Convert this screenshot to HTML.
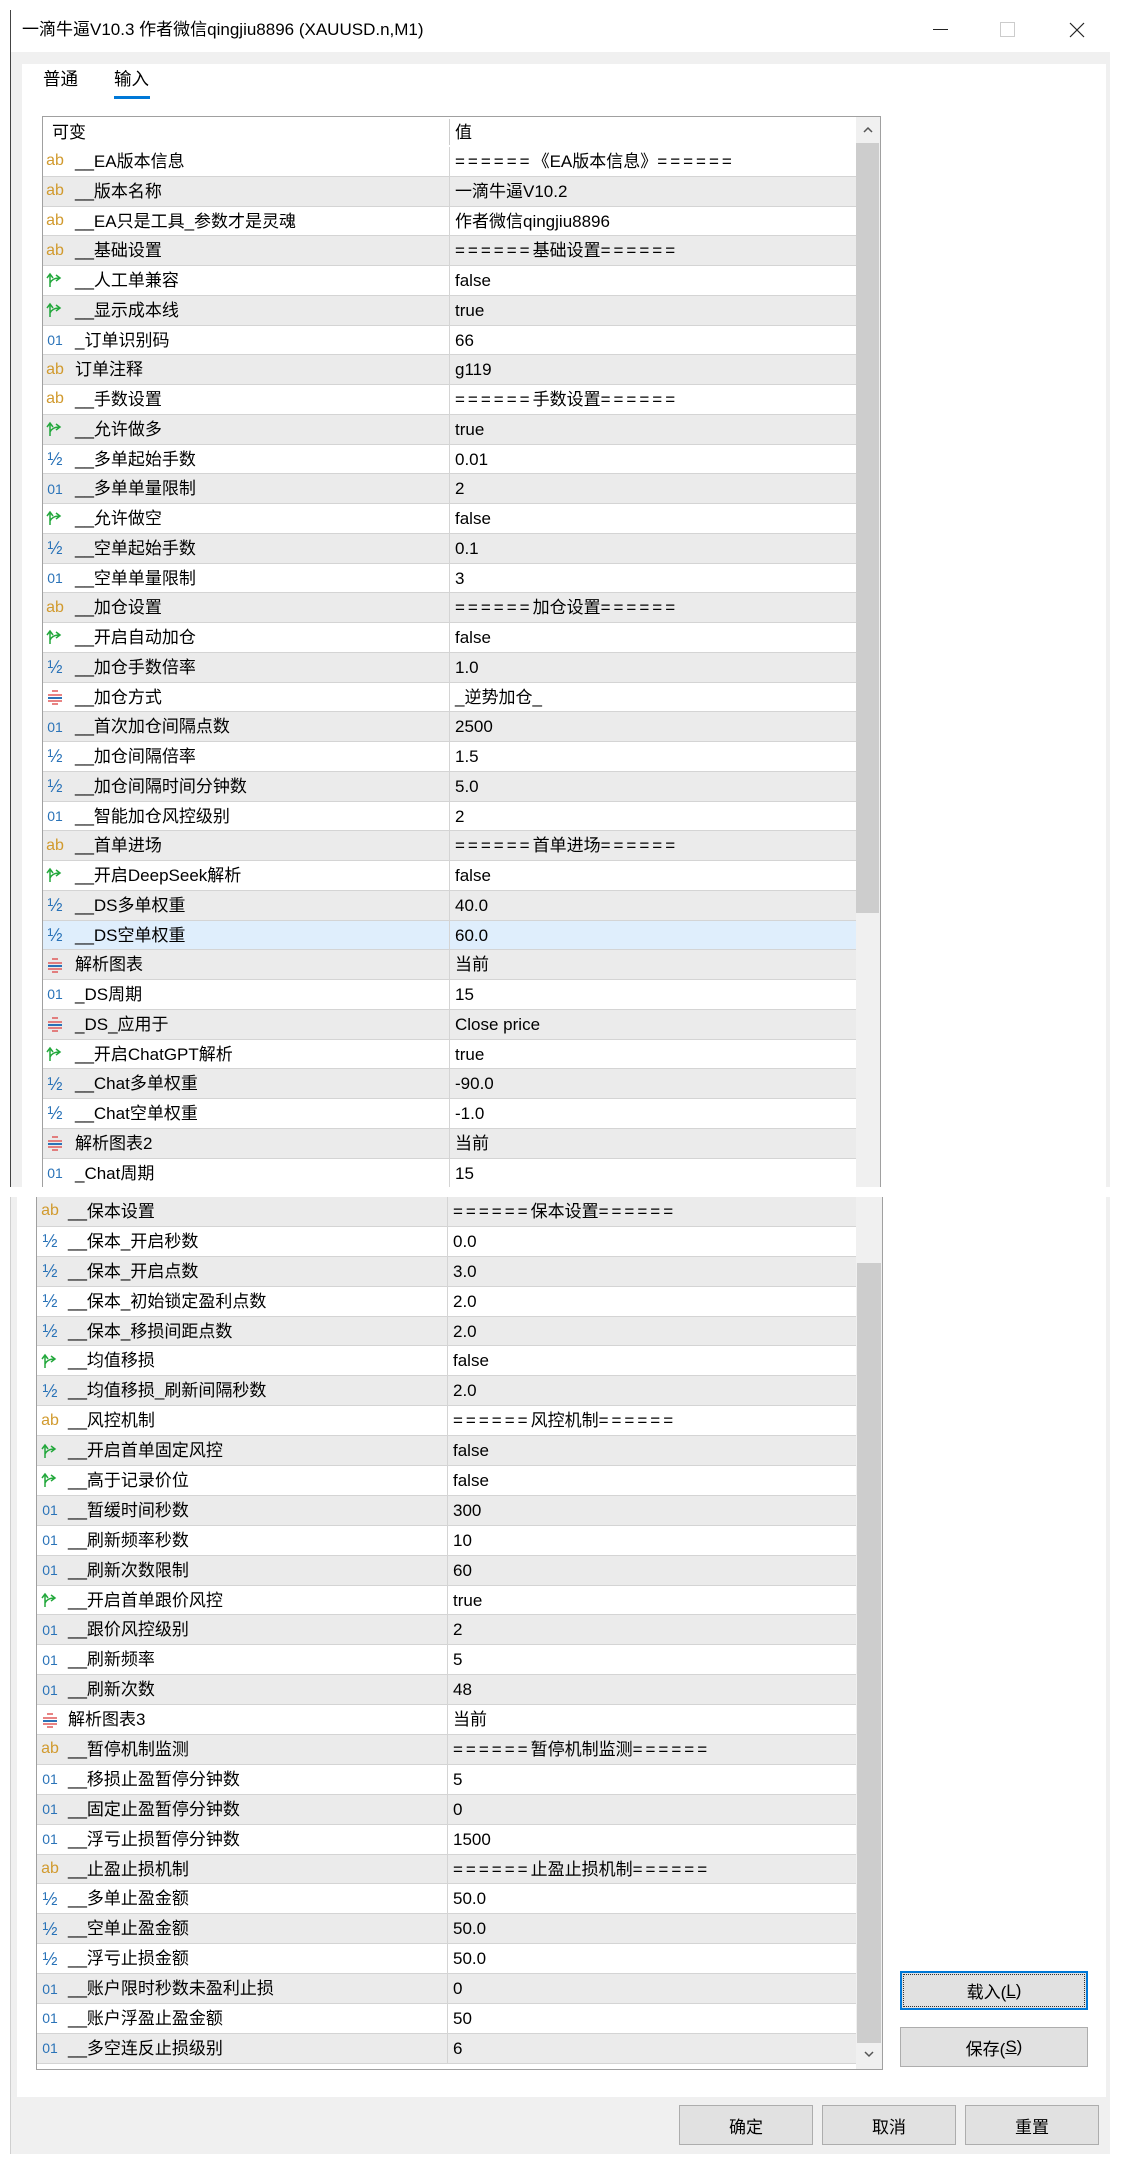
<!DOCTYPE html>
<html><head><meta charset="utf-8">
<style>
*{margin:0;padding:0;box-sizing:border-box}
body{width:1127px;height:2164px;position:relative;background:#fff;font-family:"Liberation Sans","Noto Sans CJK SC",sans-serif;color:#000;overflow:hidden}
.abs{position:absolute}
.row{position:relative;border-bottom:1px solid #d4d4d4;font-size:17px;white-space:nowrap}
.g{background:#ebebeb}
.w{background:#fff}
.h{background:#dfeefc}
.ic{position:absolute;width:22px;text-align:center;font-size:16px;line-height:20px}
.nm,.vl{position:absolute;top:1px}
.eq{letter-spacing:3px}
.ab{color:#d19a2e}
.n01{color:#2a73b8;font-size:14px}
.hf{color:#2a73b8;font-size:18px}
.btn{position:absolute;background:#e1e1e1;border:1px solid #adadad;font-size:17px;display:flex;align-items:center;justify-content:center}
</style></head><body>

<div class="abs" style="left:22px;top:17px;font-size:17px;line-height:26px">一滴牛逼V10.3 作者微信qingjiu8896 (XAUUSD.n,M1)</div>
<div class="abs" style="left:933px;top:29px;width:15px;height:1px;background:#222"></div>
<div class="abs" style="left:1000px;top:22px;width:15px;height:15px;border:1px solid #ccc"></div>
<svg class="abs" style="left:1069px;top:22px" width="16" height="16"><path d="M1 1L15 15M15 1L1 15" stroke="#222" stroke-width="1.2"/></svg>

<div class="abs" style="left:10px;top:10px;width:1px;height:1177px;background:#444"></div>
<div class="abs" style="left:11px;top:52px;width:1099px;height:12px;background:#f0f0f0"></div>
<div class="abs" style="left:11px;top:64px;width:11px;height:1123px;background:#f0f0f0"></div>
<div class="abs" style="left:1106px;top:64px;width:4px;height:1123px;background:#f0f0f0"></div>
<div class="abs" style="left:43px;top:67px;font-size:17.5px;line-height:24px">普通</div>
<div class="abs" style="left:114px;top:67px;font-size:17.5px;line-height:24px">输入</div>
<div class="abs" style="left:114px;top:96px;width:36px;height:3px;background:#0078d7"></div>

<div class="abs" style="left:42px;top:116px;width:839px;height:1071px;border:1px solid #a0a0a0;border-bottom:none;overflow:hidden;background:#fff">
 <div style="position:absolute;left:0;top:0;width:813px">
  <div class="row w" style="height:30px;border-bottom:none"><span class="nm" style="left:9px;line-height:30px">可变</span><span class="vl" style="left:412px;line-height:30px">值</span><div style="position:absolute;left:406px;top:2px;width:1px;height:26px;background:#ccc"></div></div>
  <div id="t1"></div>
 </div>
 <div style="position:absolute;left:813px;top:0;width:24px;height:1071px;background:#f0f0f0"></div>
 <svg style="position:absolute;left:819px;top:8px" width="12" height="10"><path d="M2 7L6 3L10 7" stroke="#555" stroke-width="1.5" fill="none"/></svg>
 <div style="position:absolute;left:813px;top:26px;width:23px;height:770px;background:#cdcdcd"></div>
</div>

<div class="abs" style="left:10px;top:1197px;width:1px;height:957px;background:#d0d0d0"></div>
<div class="abs" style="left:11px;top:1197px;width:6px;height:957px;background:#f0f0f0"></div>
<div class="abs" style="left:17px;top:2097px;width:1093px;height:57px;background:#f0f0f0"></div>
<div class="abs" style="left:1106px;top:1197px;width:4px;height:900px;background:#f0f0f0"></div>

<div class="abs" style="left:36px;top:1197px;width:847px;height:873px;border:1px solid #a0a0a0;border-top:none;overflow:hidden;background:#fff">
 <div style="position:absolute;left:0;top:0;width:819px" id="t2"></div>
 <div style="position:absolute;left:819px;top:0;width:26px;height:873px;background:#f0f0f0"></div>
 <div style="position:absolute;left:820px;top:66px;width:24px;height:780px;background:#cdcdcd"></div>
 <svg style="position:absolute;left:826px;top:852px" width="12" height="10"><path d="M2 3L6 7L10 3" stroke="#555" stroke-width="1.5" fill="none"/></svg>
</div>

<div class="btn" style="left:900px;top:1971px;width:188px;height:39px;border:2px solid #0078d7"><div style="position:absolute;inset:1px;border:1px dotted #333"></div>载入(<u>L</u>)</div>
<div class="btn" style="left:900px;top:2027px;width:188px;height:40px">保存(<u>S</u>)</div>
<div class="btn" style="left:679px;top:2105px;width:134px;height:40px">确定</div>
<div class="btn" style="left:822px;top:2105px;width:134px;height:40px">取消</div>
<div class="btn" style="left:965px;top:2105px;width:134px;height:40px">重置</div>

<script>
const AB='<span class="ab">ab</span>',N='<span class="n01">01</span>',H='<span class="hf">½</span>';
const B='<svg width="20" height="20" viewBox="0 0 20 20"><path d="M5 17V5M2 8L5 4L8 8M5 13C7 9 10 8 14 8M11 5L15 8L11 11" stroke="#23a83c" stroke-width="1.5" fill="none"/></svg>';
const E='<svg width="20" height="20" viewBox="0 0 20 20"><path d="M7 4H13M3 8H17M3 14H17M7 17H13" stroke="#e05a5a" stroke-width="1.6"/><path d="M3 11H17" stroke="#2a73b8" stroke-width="2"/></svg>';
const r1=[[AB,'__EA版本信息','======《EA版本信息》======'],[AB,'__版本名称','一滴牛逼V10.2'],[AB,'__EA只是工具_参数才是灵魂','作者微信qingjiu8896'],[AB,'__基础设置','======基础设置======'],[B,'__人工单兼容','false'],[B,'__显示成本线','true'],[N,'_订单识别码','66'],[AB,'订单注释','g119'],[AB,'__手数设置','======手数设置======'],[B,'__允许做多','true'],[H,'__多单起始手数','0.01'],[N,'__多单单量限制','2'],[B,'__允许做空','false'],[H,'__空单起始手数','0.1'],[N,'__空单单量限制','3'],[AB,'__加仓设置','======加仓设置======'],[B,'__开启自动加仓','false'],[H,'__加仓手数倍率','1.0'],[E,'__加仓方式','_逆势加仓_'],[N,'__首次加仓间隔点数','2500'],[H,'__加仓间隔倍率','1.5'],[H,'__加仓间隔时间分钟数','5.0'],[N,'__智能加仓风控级别','2'],[AB,'__首单进场','======首单进场======'],[B,'__开启DeepSeek解析','false'],[H,'__DS多单权重','40.0'],[H,'__DS空单权重','60.0'],[E,'解析图表','当前'],[N,'_DS周期','15'],[E,'_DS_应用于','Close price'],[B,'__开启ChatGPT解析','true'],[H,'__Chat多单权重','-90.0'],[H,'__Chat空单权重','-1.0'],[E,'解析图表2','当前'],[N,'_Chat周期','15'],[AB,'__保本设置','']];
const r2=[[AB,'__保本设置','======保本设置======'],[H,'__保本_开启秒数','0.0'],[H,'__保本_开启点数','3.0'],[H,'__保本_初始锁定盈利点数','2.0'],[H,'__保本_移损间距点数','2.0'],[B,'__均值移损','false'],[H,'__均值移损_刷新间隔秒数','2.0'],[AB,'__风控机制','======风控机制======'],[B,'__开启首单固定风控','false'],[B,'__高于记录价位','false'],[N,'__暂缓时间秒数','300'],[N,'__刷新频率秒数','10'],[N,'__刷新次数限制','60'],[B,'__开启首单跟价风控','true'],[N,'__跟价风控级别','2'],[N,'__刷新频率','5'],[N,'__刷新次数','48'],[E,'解析图表3','当前'],[AB,'__暂停机制监测','======暂停机制监测======'],[N,'__移损止盈暂停分钟数','5'],[N,'__固定止盈暂停分钟数','0'],[N,'__浮亏止损暂停分钟数','1500'],[AB,'__止盈止损机制','======止盈止损机制======'],[H,'__多单止盈金额','50.0'],[H,'__空单止盈金额','50.0'],[H,'__浮亏止损金额','50.0'],[N,'__账户限时秒数未盈利止损','0'],[N,'__账户浮盈止盈金额','50'],[N,'__多空连反止损级别','6']];
function fmt(v){return v.replace(/=+/g,m=>'<span class="eq">'+m+'</span>');}
function build(rows,h,start,ix,nx,vx,div,hl){let s='';rows.forEach((r,i)=>{const k=i+start;let c=(k%2)?'g':'w';if(k===hl)c='h';
s+=`<div class="row ${c}" style="height:${h}px"><span class="ic" style="left:${ix}px;top:${(h-21)/2}px">${r[0]}</span><span class="nm" style="left:${nx}px;line-height:${h-1}px">${r[1]}</span><div style="position:absolute;left:${div}px;top:0;width:1px;height:100%;background:#d4d4d4"></div><span class="vl" style="left:${vx}px;line-height:${h-1}px">${fmt(r[2])}</span></div>`});return s;}
document.getElementById('t1').innerHTML=build(r1,29.75,0,1,32,412,406,26);
document.getElementById('t2').innerHTML=build(r2,29.9,35,2,31,416,410,-1);
</script>
</body></html>
